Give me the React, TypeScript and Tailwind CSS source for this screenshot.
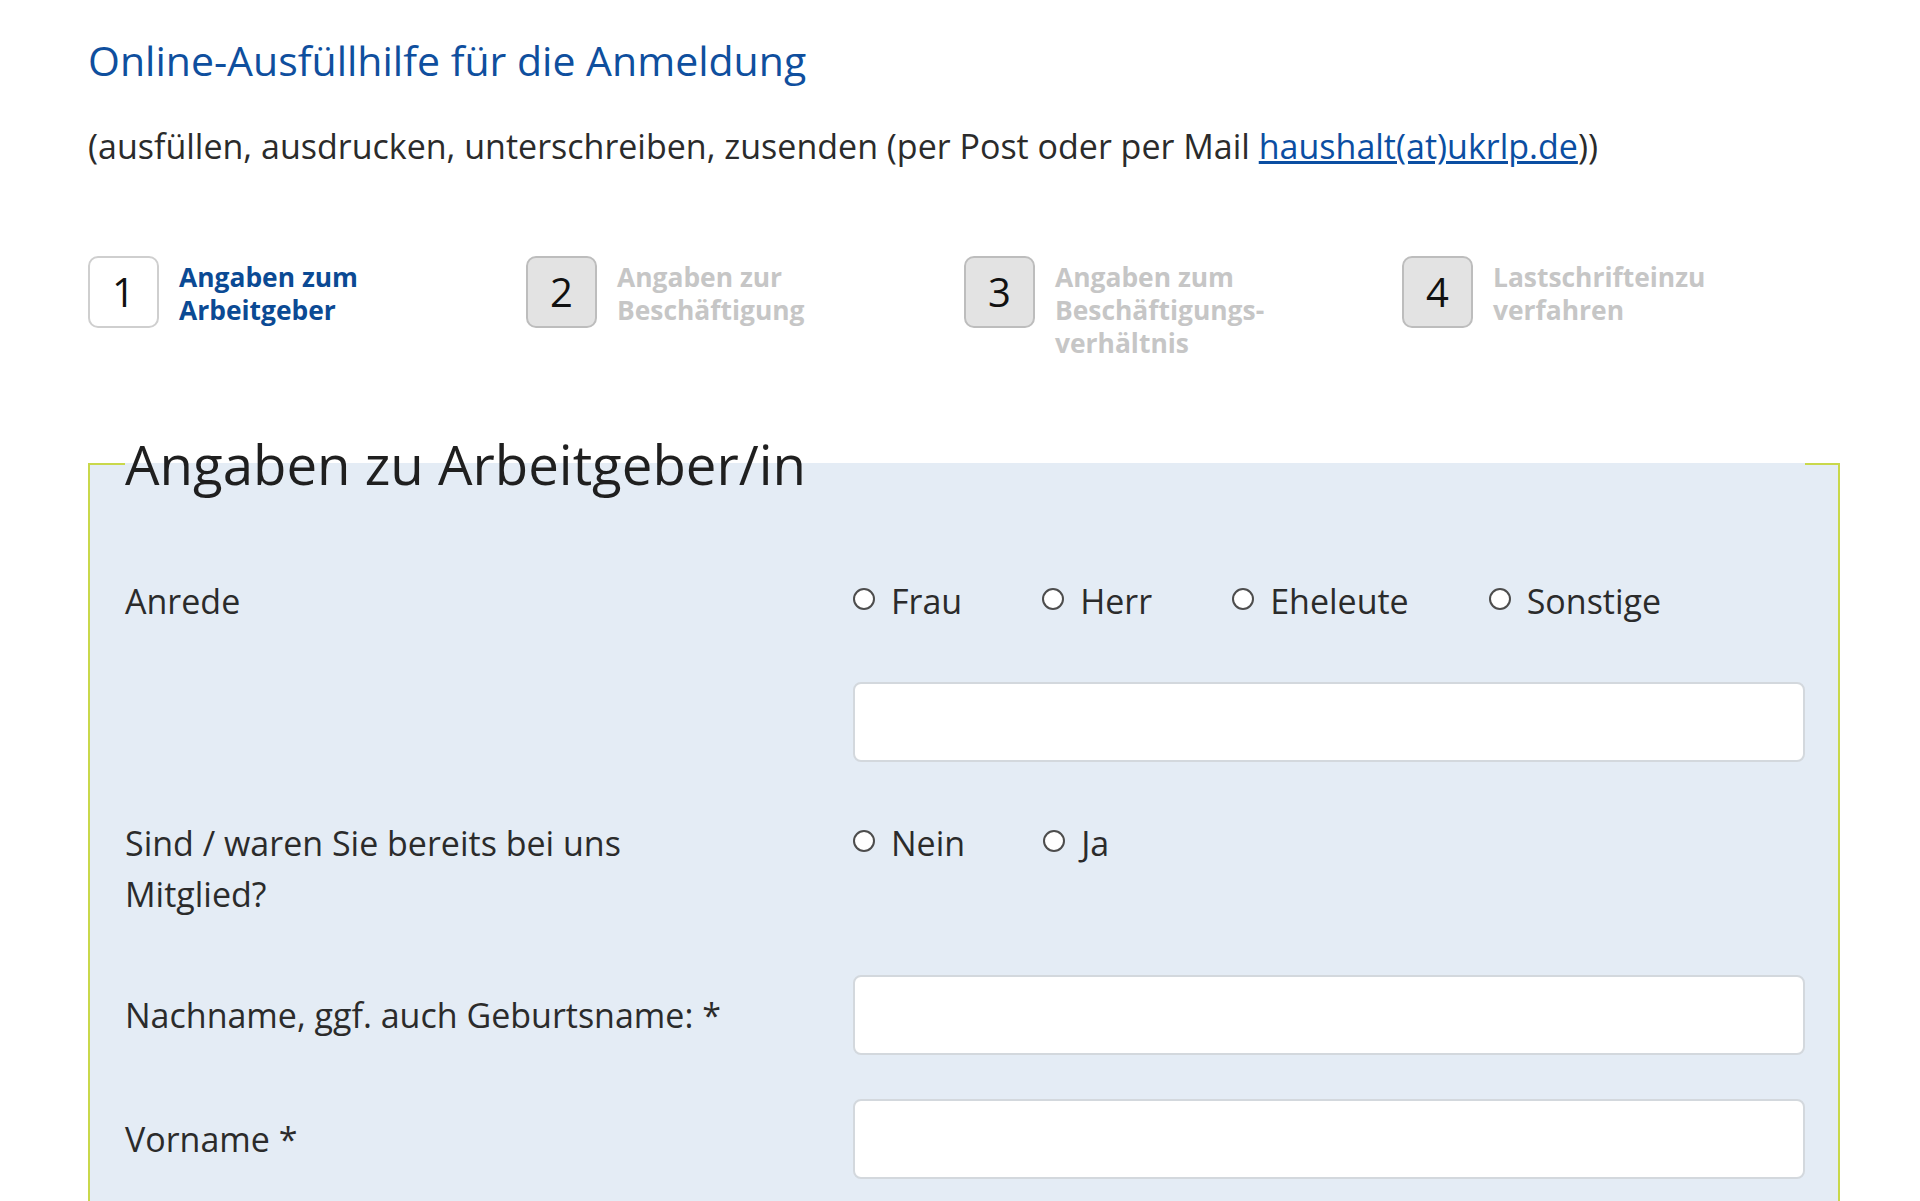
const steps = [
  { n: 1, lines: ['Angaben zum', 'Arbeitgeber'], active: true },
  { n: 2, lines: ['Angaben zur', 'Beschäftigung'], active: false },
  { n: 3, lines: ['Angaben zum', 'Beschäftigungs-', 'verhältnis'], active: false },
  { n: 4, lines: ['Lastschrifteinzu', 'verfahren'], active: false },
]

const Radio = ({ name, label }: { name: string; label: string }) => (
  <label className="flex items-center gap-[16px]">
    <input
      type="radio"
      name={name}
      className="appearance-none w-[22px] h-[22px] rounded-full border-2 border-[#4d4d4d] bg-white -mt-[5px]"
    />
    <span>{label}</span>
  </label>
)

const TextInput = () => (
  <input
    type="text"
    className="block w-full h-[80px] rounded-[8px] border-2 border-[#d3d8dd] bg-white px-4"
  />
)

const App = () => {
  return (
    <div className="min-h-screen bg-white font-['Open_Sans',sans-serif] text-[#2b2b2b]">
      <div className="ml-[88px] w-[1752px] pt-[35px]">
        {/* header */}
        <h1 className="text-[41px] leading-[50px] text-[#0f4f9e]">
          Online-Ausfüllhilfe für die Anmeldung
        </h1>
        <p className="mt-[36px] text-[34px] leading-[51px]">
          (ausfüllen, ausdrucken, unterschreiben, zusenden (per Post oder per Mail{' '}
          <a href="#" className="text-[#0b4ea2] underline">haushalt(at)ukrlp.de</a>))
        </p>

        {/* steps */}
        <div className="mt-[84px] grid grid-cols-4">
          {steps.map((s) => (
            <div key={s.n} className="flex gap-[20px]">
              <div
                className={
                  s.active
                    ? 'flex h-[72px] w-[71px] shrink-0 items-center justify-center rounded-[10px] border-2 border-[#cfcfcf] bg-white text-[40px] text-[#111]'
                    : 'flex h-[72px] w-[71px] shrink-0 items-center justify-center rounded-[10px] border-2 border-[#bdbdbd] bg-[#e3e3e3] text-[40px] text-[#111]'
                }
              >
                {s.n}
              </div>
              <div
                className={
                  s.active
                    ? 'pt-[5px] text-[26.4px] font-bold leading-[33px] text-[#0b4a94]'
                    : 'pt-[5px] text-[26.4px] font-bold leading-[33px] text-[#c6c6c6]'
                }
              >
                {s.lines.map((l) => (
                  <div key={l}>{l}</div>
                ))}
              </div>
            </div>
          ))}
        </div>

        {/* form */}
        <fieldset className="mt-[72px] border-2 border-[#c9d84b] bg-[#e4ecf5] pl-[35px] pr-[33px] pb-[80px]">
          <legend className="w-full text-[54.6px] leading-[64px] text-[#1f1f1f]">
            Angaben zu Arbeitgeber/in
          </legend>

          <div className="mt-[80px] grid grid-cols-[728px_1fr] text-[34px] leading-[51px]">
            <div>Anrede</div>
            <div>
              <div className="flex items-start gap-[80px]">
                <Radio name="anrede" label="Frau" />
                <Radio name="anrede" label="Herr" />
                <Radio name="anrede" label="Eheleute" />
                <Radio name="anrede" label="Sonstige" />
              </div>
              <div className="mt-[55px]">
                <TextInput />
              </div>
            </div>
          </div>

          <div className="mt-[56px] grid grid-cols-[728px_1fr] text-[34px] leading-[51px]">
            <div className="max-w-[580px]">Sind / waren Sie bereits bei uns Mitglied?</div>
            <div className="flex items-start gap-[78px]">
              <Radio name="mitglied" label="Nein" />
              <Radio name="mitglied" label="Ja" />
            </div>
          </div>

          <div className="mt-[55px] grid grid-cols-[728px_1fr] items-center text-[34px] leading-[51px]">
            <div>Nachname, ggf. auch Geburtsname: *</div>
            <TextInput />
          </div>

          <div className="mt-[44px] grid grid-cols-[728px_1fr] items-center text-[34px] leading-[51px]">
            <div>Vorname *</div>
            <TextInput />
          </div>
        </fieldset>
      </div>
    </div>
  )
}

export default App
